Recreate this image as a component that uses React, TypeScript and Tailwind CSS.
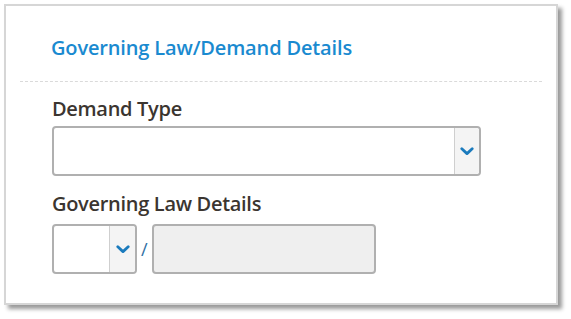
function Chevron() {
  return (
    <svg width="14" height="9" viewBox="0 0 14 9" className="text-[#1b7bbd]">
      <path d="M1.8 1.8 L7 6.6 L12.2 1.8" fill="none" stroke="currentColor" strokeWidth={2.8} strokeLinecap="round" strokeLinejoin="round" />
    </svg>
  );
}

export default function App() {
  return (
    <div className="w-[571px] h-[319px] bg-white pt-[4px] pl-[4px]" style={{ fontFamily: '"Open Sans", "Noto Sans", sans-serif' }}>
      <div className="w-[554px] h-[301px] border-2 border-[#d6d6d6] bg-white shadow-[4px_4px_4px_rgba(0,0,0,0.4)] px-[14px]">
        <div className="pl-[31px] pt-[28px] h-[76px] border-b border-dashed border-[#dadada]">
          <h2 className="text-[20px] leading-[28px] font-semibold text-[#1a8ad0] tracking-[-0.15px]">Governing Law/Demand Details</h2>
        </div>
        <div className="pl-[32px] pt-[13px]">
          <label className="block text-[20px] font-semibold text-[#3b3530] leading-[28px] tracking-[-0.3px]">Demand Type</label>
          <div className="mt-[3px] w-[429px] h-[50px] border-2 border-[#b0b0b0] rounded-[4px] flex">
            <div className="flex-1" />
            <div className="w-[25px] border-l border-[#cfcfcf] bg-[#f4f4f4] rounded-r-[3px] flex items-center justify-center">
              <Chevron />
            </div>
          </div>
          <label className="block mt-[14px] text-[20px] font-semibold text-[#3b3530] leading-[28px] tracking-[-0.3px]">Governing Law Details</label>
          <div className="mt-[6px] flex items-center">
            <div className="w-[85px] h-[50px] border-2 border-[#b0b0b0] rounded-[4px] flex">
              <div className="flex-1" />
              <div className="w-[26px] border-l border-[#cfcfcf] bg-[#f4f4f4] rounded-r-[3px] flex items-center justify-center">
                <Chevron />
              </div>
            </div>
            <span className="mx-[4px] text-[18px] text-[#2f6fa3]">/</span>
            <div className="w-[224px] h-[50px] border-2 border-[#b0b0b0] rounded-[4px] bg-[#efefef]" />
          </div>
        </div>
      </div>
    </div>
  );
}
